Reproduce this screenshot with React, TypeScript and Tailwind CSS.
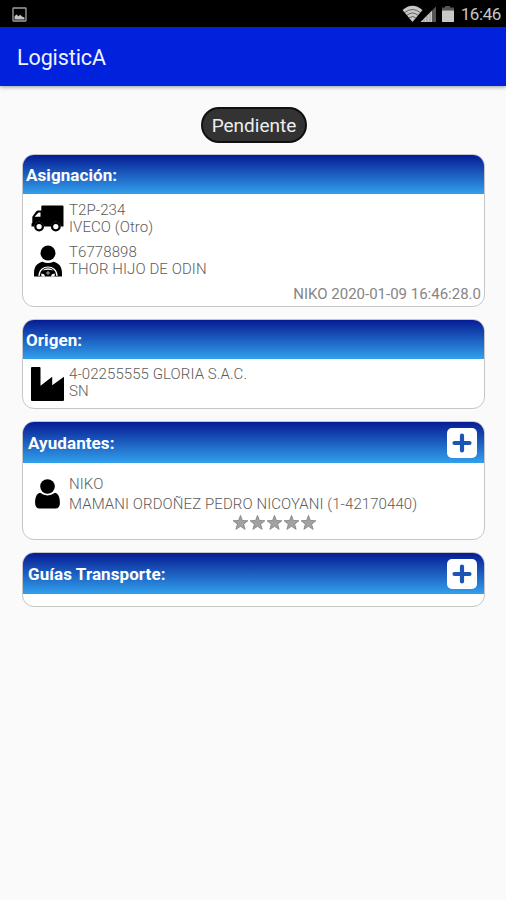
import React from "react";

const TruckIcon = () => (
  <svg viewBox="0 0 33 27" className="h-[27px] w-[33px]">
    <path
      fill="#000"
      d="M11.3 0.500H31.500q1 0 1 1V21.500H29.500a4.700 4.700 0 0 0-9.400 0H12.800a4.700 4.700 0 0 0-9.400 0H.5V18.500l.8-.5v-5.500q0-.8.5-1.400L5.300 6.300q.6-.9 1.700-.9h3.300V1.500q0-1 1-1zM9.500 7.400H7.600L3.600 11.700H9.500z"
    />
    <circle cx="8.100" cy="21.600" r="3.800" fill="#fff" stroke="#000" strokeWidth="2.300" />
    <circle cx="24.800" cy="21.600" r="3.800" fill="#fff" stroke="#000" strokeWidth="2.300" />
  </svg>
);

const DriverIcon = () => (
  <svg viewBox="0 0 30 32" className="h-[32px] w-[30px]">
    <circle cx="15" cy="8" r="7.500" fill="#000" />
    <path fill="#000" d="M1 31.500V28C1 21 5 17.800 9.500 16.800q5.500 2.400 11 0C25 17.800 29 21 29 28v3.500z" />
    <path fill="none" stroke="#fff" strokeWidth="1.200" d="M6 31C6 19 24 19 24 31" />
    <path fill="#fff" d="M9.300 25.500q5.700-4.500 11.400 0-5.700-1.600-11.400 0zM8.200 28.500l2.800.8 1.200 2.200H8.500zM21.800 28.500l-2.800.8-1.200 2.200h3.700z" />
    <circle cx="15" cy="28" r="1.200" fill="none" stroke="#fff" strokeWidth="0.700" />
  </svg>
);

const FactoryIcon = () => (
  <svg viewBox="0 0 33 34" className="h-[34px] w-[33px]">
    <path fill="#000" d="M1 0h7.500q1 0 1 1v17.800L21.200 9.800v8.400L33 9.800V33q0 1-1 1H1q-1 0-1-1V1Q0 0 1 0z" />
  </svg>
);

const PersonIcon = () => (
  <svg viewBox="0 0 25 30" className="h-[30px] w-[25px]">
    <circle cx="12.500" cy="7.500" r="7.300" fill="#000" />
    <path fill="#000" d="M5 13.800q7.500 5.200 15 0c3.700.8 4.900 5 4.900 10.200 0 3.500-1.500 5.500-4.500 5.500H4.600C1.600 29.500.1 27.500.1 24c0-5.200 1.200-9.400 4.900-10.200z" />
  </svg>
);

const StarIcon = () => (
  <svg viewBox="0 0 24 24" className="h-[17px] w-[17px]">
    <path fill="#a2a2a2" stroke="#828282" strokeWidth="1.200" d="M12 2l2.700 7.200 7.700.3-6 4.800 2.100 7.400L12 17.400l-6.500 4.300 2.100-7.400-6-4.800 7.700-.3z" />
  </svg>
);

const AddButton = () => (
  <button className="mr-[7px] flex h-[30px] w-[30px] items-center justify-center rounded-[5px] bg-white">
    <svg viewBox="0 0 20 20" className="h-5 w-5">
      <path fill="none" stroke="#1b56b5" strokeWidth="4.200" strokeLinecap="round" d="M10 2.500v15M2.500 10h15" />
    </svg>
  </button>
);

const StatusBar = () => (
  <div className="flex h-[27px] items-center justify-between bg-black pr-[5px] pl-[12px]">
    <svg viewBox="0 0 15 15" className="mt-[1px] h-[15px] w-[15px]">
      <rect x="1" y="1" width="13" height="13" rx="0.500" fill="none" stroke="#a0a0a0" strokeWidth="1.300" />
      <path fill="#c4c4c4" d="M2.500 12.500V9.200l2-1.800 2 1.800 1.800-1.500 2 2 2.200.8v2z" />
    </svg>
    <div className="flex items-center">
      <svg viewBox="0 0 54 18" className="mt-[1px] mr-[5px] h-[18px] w-[54px]">
        <path fill="#c8c8c8" d="M0.500 5Q10.500-3.500 20.500 5L10.500 17z" />
        <path fill="none" stroke="#444" strokeWidth="0.800" d="M2.800 7.600q7.700-6.200 15.400 0M5 10.200q5.500-4.400 11 0M7.200 12.800q3.300-2.600 6.600 0" />
        <path fill="#c8c8c8" d="M18.500 17L30 5.500V17z" />
        <path fill="#555" d="M30 5.500L34 1.500V17h-4z" />
        <path stroke="#777" strokeWidth="0.600" d="M22 14v3M25 11v6M28 8v9" />
        <path fill="#555" d="M43 1h5v1.500h4V6H40V2.500h3z" />
        <path fill="#c8c8c8" d="M40 5.500h12V17H40z" />
      </svg>
      <span className="mt-[1px] text-[17px] leading-[27px] tracking-[-0.400px] text-[#c6c6c6]">16:46</span>
    </div>
  </div>
);

type CardProps = {
  title: string;
  add?: boolean;
  className: string;
  children?: React.ReactNode;
};

const Card = ({ title, add, className, children }: CardProps) => (
  <section className={`flex flex-col overflow-hidden rounded-[12px] border border-[#c6c6c8] bg-white ${className}`}>
    <header
      className={`flex shrink-0 items-center justify-between bg-linear-to-b/srgb from-[#061c94] to-[#32a0ec] ${
        add ? "h-[41px] pl-[5px]" : "h-[39px] pl-[3px]"
      }`}
    >
      <h2 className="text-[17px] leading-5 font-bold text-white">{title}</h2>
      {add && <AddButton />}
    </header>
    {children}
  </section>
);

const App = () => {
  return (
    <div className="flex h-[900px] w-[506px] flex-col bg-[#fafafa] font-[Roboto,sans-serif]">
      <StatusBar />
      <div className="z-10 flex h-[59px] shrink-0 items-center bg-[#0022dc] pl-[17px] shadow-[0_1px_4px_rgba(0,0,0,0.4)]">
        <h1 className="mt-[2px] text-[21.500px] leading-7 tracking-[-0.100px] text-[#f0f2ff]">LogisticA</h1>
      </div>

      <main className="flex flex-col pr-[21px] pl-[22px]">
        <div className="mt-[21px] ml-[179px] flex h-[36px] w-[106px] items-center justify-center rounded-full border-2 border-[#111] bg-[#333] pt-[2px] text-[19px] text-[#eee]">
          Pendiente
        </div>

        <div className="mt-[11px] flex flex-col gap-3 text-[15px] leading-[17px] font-light tracking-[0.080px] text-[#5c5c5c]">
          <Card title="Asignación:" className="h-[153px]">
            <div className="mt-2 flex h-[35px]">
              <div className="mt-[3px] ml-2 w-[38px]">
                <TruckIcon />
              </div>
              <div>
                <p>T2P-234</p>
                <p>IVECO (Otro)</p>
              </div>
            </div>
            <div className="mt-[7px] flex h-[34px]">
              <div className="mt-[1px] ml-[10px] w-[36px]">
                <DriverIcon />
              </div>
              <div>
                <p>T6778898</p>
                <p>THOR HIJO DE ODIN</p>
              </div>
            </div>
            <p className="mt-2 pr-[3px] text-right font-normal tracking-normal text-[#858585]">NIKO 2020-01-09 16:46:28.0</p>
          </Card>

          <Card title="Origen:" className="h-[90px]">
            <div className="mt-[7px] flex">
              <div className="mt-[1px] ml-2 w-[38px]">
                <FactoryIcon />
              </div>
              <div>
                <p>4-02255555 GLORIA S.A.C.</p>
                <p>SN</p>
              </div>
            </div>
          </Card>

          <Card title="Ayudantes:" add className="h-[119px]">
            <div className="mt-[11px] flex">
              <div className="mt-[5px] ml-3 w-[34px]">
                <PersonIcon />
              </div>
              <div className="leading-[20px]">
                <p>NIKO</p>
                <p>MAMANI ORDOÑEZ PEDRO NICOYANI (1-42170440)</p>
              </div>
            </div>
            <div className="ml-[209px] flex">
              {[1, 2, 3, 4, 5].map((n) => (
                <StarIcon key={n} />
              ))}
            </div>
          </Card>

          <Card title="Guías Transporte:" add className="h-[55px]" />
        </div>
      </main>
    </div>
  );
};

export default App;
